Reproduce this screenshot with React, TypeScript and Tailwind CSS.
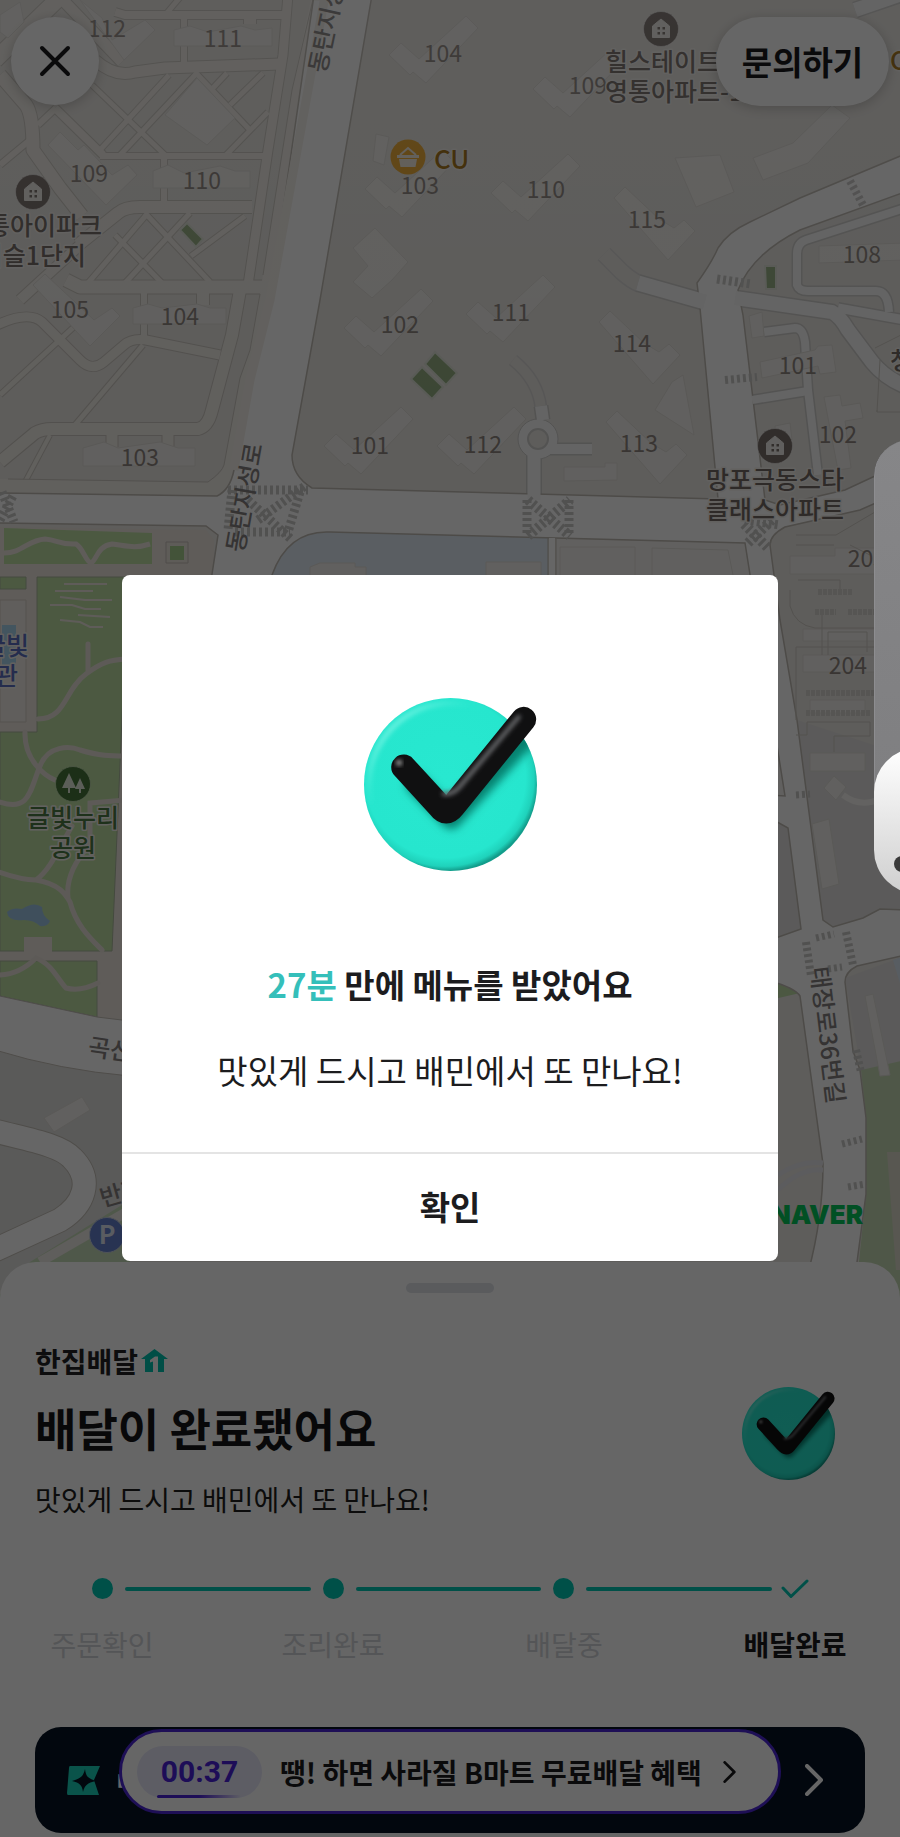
import React, { useId } from "react";

type Point = [number, number];

const FONT = "font-['Noto_Sans_CJK_KR','Noto_Sans',sans-serif]";

/* ---------- shared artwork ---------- */

function CheckArt({ className }: { className: string }) {
  const id = useId();
  return (
    <svg viewBox="133 115 518 518" className={className} overflow="visible" aria-hidden="true">
      <defs>
        <radialGradient id={`${id}disc`} cx="0.47" cy="0.46" r="0.54">
          <stop offset="0" stopColor="#28e8d0" />
          <stop offset="0.86" stopColor="#26e6ce" />
          <stop offset="0.95" stopColor="#1fd2bb" />
          <stop offset="1" stopColor="#129d8b" />
        </radialGradient>
        <linearGradient id={`${id}shine`} x1="0" y1="0" x2="0.6" y2="0.6">
          <stop offset="0" stopColor="#c4fff6" />
          <stop offset="0.55" stopColor="#4cf0dc" stopOpacity="0" />
        </linearGradient>
        <filter id={`${id}soft`} x="-30%" y="-30%" width="160%" height="160%">
          <feGaussianBlur stdDeviation="13" />
        </filter>
        <filter id={`${id}fine`} x="-30%" y="-30%" width="160%" height="160%">
          <feGaussianBlur stdDeviation="6" />
        </filter>
        <clipPath id={`${id}clip`}>
          <circle cx="392" cy="374" r="259" />
        </clipPath>
      </defs>
      <circle cx="392" cy="374" r="259" fill={`url(#${id}disc)`} />
      <g clipPath={`url(#${id}clip)`}>
        <circle cx="392" cy="374" r="243" fill="none" stroke={`url(#${id}shine)`} strokeWidth="16" filter={`url(#${id}fine)`} />
        <path d="M290 372 L394 476 L640 208" fill="none" stroke="#04705f" strokeOpacity="0.85" strokeWidth="64" strokeLinecap="round" strokeLinejoin="round" filter={`url(#${id}soft)`} />
      </g>
      <path d="M252 322 L360 440 Q379 466 399 440 L611 179" fill="none" stroke="#101011" strokeWidth="75" strokeLinecap="round" strokeLinejoin="round" />
      <path d="M372 402 Q400 404 420 380 L596 172" fill="none" stroke="#66676a" strokeWidth="13" strokeLinecap="round" filter={`url(#${id}fine)`} />
      <circle cx="238" cy="309" r="9" fill="#9a9a9a" filter={`url(#${id}fine)`} />
    </svg>
  );
}

function Chevron({ className, width }: { className: string; width: number }) {
  return (
    <svg viewBox="0 0 18 32" className={className} fill="none" stroke="currentColor" strokeWidth={width} strokeLinecap="round" strokeLinejoin="round" aria-hidden="true">
      <path d="M2 2 L16 16 L2 30" />
    </svg>
  );
}

/* ---------- map ---------- */

const STREETS: { d: string; w: number }[] = [
  { d: "M288 -5 L283 55 L268 150 L248 285", w: 9 },
  { d: "M115 12 L125 15 L283 15", w: 8 },
  { d: "M95 60 Q115 78 135 72 L165 68 L280 64", w: 11 },
  { d: "M100 156 L264 156", w: 6 },
  { d: "M78 245 L118 213 Q125 207 140 207 L252 207", w: 12 },
  { d: "M66 280 L80 287 L262 287", w: 13 },
  { d: "M0 75 L26 105 Q33 115 33 150 L60 188 L82 216", w: 13 },
  { d: "M-5 60 L62 -5", w: 16 },
  { d: "M58 -5 L122 62", w: 11 },
  { d: "M182 -5 L166 14", w: 5 },
  { d: "M92 85 L165 155", w: 5 },
  { d: "M195 72 L250 130", w: 5 },
  { d: "M55 108 L103 155", w: 8 },
  { d: "M100 150 L169 75", w: 5 },
  { d: "M120 155 L197 73", w: 5 },
  { d: "M226 155 L268 112", w: 5 },
  { d: "M213 88 L227 73", w: 5 },
  { d: "M230 105 L263 73", w: 5 },
  { d: "M38 125 L56 108", w: 6 },
  { d: "M0 165 L30 140", w: 6 },
  { d: "M145 213 L210 282", w: 5 },
  { d: "M115 235 L162 283", w: 5 },
  { d: "M88 283 L148 213", w: 5 },
  { d: "M125 283 L190 213", w: 5 },
  { d: "M191 256 L245 216", w: 5 },
  { d: "M20 300 L80 245", w: 10 },
  { d: "M184 18 L184 62", w: 6 },
  { d: "M250 18 L250 24", w: 12 },
  { d: "M164 158 L164 205", w: 6 },
  { d: "M144 290 L144 338", w: 6 },
  { d: "M203 290 L203 305", w: 12 },
  { d: "M-5 326 Q28 310 42 322 L80 360 Q92 372 104 362 L124 345 Q132 338 146 340 L220 355", w: 9 },
  { d: "M0 395 L76 325", w: 5 },
  { d: "M143 345 L75 425", w: 5 },
  { d: "M0 462 L35 433 Q42 429 52 429 L198 429 Q208 427 212 410 L232 335 L240 290", w: 12 },
  { d: "M50 435 L25 482", w: 4 },
  { d: "M112 432 L112 447", w: 11 },
  { d: "M168 432 L168 447", w: 11 },
];

const WHITE_STREETS: { d: string; w: number }[] = [
  { d: "M638 283 L705 302", w: 15 },
  { d: "M735 298 L832 312 Q840 316 848 330 L872 362 Q885 378 905 386", w: 14 },
  { d: "M905 208 L806 240 Q797 243 797 254 L797 285 Q799 291 808 291 L876 291 Q888 291 889 312", w: 8 },
  { d: "M838 308 L905 320", w: 9 },
  { d: "M764 332 L795 328 Q803 328 805 342 L808 390 L818 475", w: 8 },
  { d: "M752 400 L808 391", w: 8 },
  { d: "M543 420 L541 406", w: 12 },
  { d: "M545 449 L592 449", w: 10 },
  { d: "M534 450 L534 500", w: 13 },
  { d: "M855 10 L908 -8", w: 14 },
];

const RAMPS: { d: string; w: number }[] = [
  { d: "M604 254 L622 272 Q632 281 640 284", w: 15 },
  { d: "M541 408 Q538 380 513 360", w: 10 },
];

const WING = "0,0 12,-12 30,4 77,-39 89,-27 37,28 24,17 21,20";
const WING_ALT = "0,0 11,-11 45,21 60,30 70,22 81,33 54,62";

const WINGS: Point[] = [[389, 55], [533, 89], [365, 189], [491, 193], [344, 328], [466, 314], [324, 446], [437, 446]];
const WINGS_ALT: Point[] = [[614, 198], [599, 322], [606, 422]];

const BUILDINGS = [
  "174,30 190,26 208,32 241,26 255,30 272,28 272,46 174,46",
  "153,171 168,165 184,173 220,166 235,171 250,171 250,188 153,188",
  "133,308 148,304 162,308 197,304 210,308 226,308 226,324 133,324",
  "83,448 104,442 118,448 160,442 178,448 195,448 195,466 83,466",
  "48,145 60,132 78,150 84,145 100,162 112,175 128,165 137,175 106,205",
  "0,15 20,2 24,22 8,38 0,32",
  "80,0 102,18 112,40 145,20 155,30 124,60",
  "33,285 45,274 62,290 75,302 94,320 112,308 120,316 90,346",
  "165,115 197,78 235,118 207,145",
  "353,248 375,228 408,262 392,280 372,298 353,282 368,266",
  "675,158 720,155 734,192 696,207",
  "753,158 793,143 832,105 850,118 808,163 763,180",
  "655,410 672,382 683,375 694,435",
  "376,134 389,137 384,165 373,161",
  "819,246 905,243 905,260 819,263",
  "760,362 815,350 818,346 832,345 836,372 820,374 818,366 762,378",
  "824,397 840,395 842,406 860,403 863,418 845,421 851,468 838,470",
  "564,467 605,467 605,463 617,463 617,480 564,481",
  "749,316 762,312 764,336 752,338",
  "775,426 790,423 792,440 776,440",
  "790,556 835,556 835,548 905,548 905,574 790,574",
  "803,629 876,629 876,641 803,641",
  "810,700 865,700 865,713 810,713",
  "803,655 876,655 876,672 803,672",
  "810,753 865,753 865,771 810,771",
  "812,824 829,819 839,884 822,889",
  "44,1118 82,1097 90,1110 54,1132",
  "824,788 834,776 846,787 836,800",
  "865,996 873,994 890,1075 880,1076",
];

const CROSSINGS: { d: string; w: number }[] = [
  { d: "M228 490 L308 490", w: 9 },
  { d: "M235 532 L290 532", w: 9 },
  { d: "M232 490 L228 530", w: 9 },
  { d: "M300 492 L288 532", w: 9 },
  { d: "M248 500 L292 540", w: 9 },
  { d: "M258 520 L305 486", w: 9 },
  { d: "M527 500 L527 535", w: 9 },
  { d: "M569 500 L569 535", w: 9 },
  { d: "M528 500 L570 536", w: 10 },
  { d: "M528 536 L570 500", w: 10 },
  { d: "M745 520 L780 525", w: 9 },
  { d: "M748 543 L772 520", w: 10 },
  { d: "M744 524 L768 548", w: 10 },
  { d: "M2 492 L14 522", w: 9 },
  { d: "M0 520 L14 494", w: 9 },
  { d: "M717 279 L751 284", w: 9 },
  { d: "M725 380 L757 377", w: 8 },
  { d: "M850 181 L863 205", w: 8 },
  { d: "M846 932 L853 965", w: 8 },
  { d: "M806 942 L811 976", w: 8 },
  { d: "M816 938 L834 934", w: 7 },
  { d: "M828 969 L842 967", w: 7 },
  { d: "M842 1144 L862 1139", w: 7 },
  { d: "M848 1187 L866 1184", w: 7 },
  { d: "M796 795 L810 794", w: 7 },
  { d: "M856 1050 L861 1072", w: 8 },
];

const NUMBERS: [string, number, number][] = [
  ["112", 107, 29], ["111", 223, 39], ["109", 89, 174], ["110", 202, 181], ["104", 443, 54],
  ["109", 588, 86], ["103", 420, 186], ["110", 546, 190], ["115", 647, 220], ["108", 862, 255],
  ["105", 70, 310], ["104", 180, 317], ["103", 140, 458], ["102", 400, 325], ["111", 511, 313],
  ["114", 632, 344], ["101", 798, 366], ["101", 370, 446], ["112", 483, 445], ["113", 639, 444],
  ["102", 838, 435], ["205", 867, 559], ["204", 848, 666],
];

const ROAD_TREE = [
  "M314 -5 L372 -5 L320 300 L292 455 Q292 476 312 488 L718 499 L700 308 L697 283 Q712 262 718 248 Q728 232 750 222 L800 198 L905 154 L905 192 L800 230 Q752 254 738 290 L743 315 L765 500 L780 505 L845 490 L905 462 L905 490 L860 510 L785 527 Q770 535 770 545 L780 620 L797 720 L823 920 L833 927 L863 918 L880 909 L905 910 L905 955 L857 966 Q845 972 845 982 L853 1051 L860 1070 L866 1118 L866 1194 L852 1300 L800 1300 Q823 1230 823 1164 L800 996 Q795 988 770 981 L770 940 L801 929 L788 828 L770 818 L770 795 L785 796 L745 543 L330 532 Q288 530 272 575 L260 620 L205 620 L218 535 L206 526 L-5 523 L-5 493 L217 496 Q230 490 234 470 L250 380 L270 300 Z",
];

function HousePin({ x, y }: { x: number; y: number }) {
  return (
    <g transform={`translate(${x} ${y})`}>
      <circle r="17.5" fill="#7a706b" stroke="#fff" strokeOpacity="0.5" />
      <path d="M-8.500 -3 L0 -10 L8.500 -3 V8.500 H-8.500 Z" fill="#f1eeea" stroke="#f1eeea" strokeLinejoin="round" />
      <path d="M-3.500 -2 h2.500 v2.500 h-2.500z M1.500 -2 h2.500 v2.500 h-2.500z M-3.500 3 h2.500 v2.500 h-2.500z M1.500 3 h2.500 v2.500 h-2.500z" fill="#7a706b" />
    </g>
  );
}

function DeliveryMap() {
  return (
    <svg viewBox="0 0 900 1298" className={`block h-auto w-full ${FONT}`} role="img" aria-label="배달 지도">
      <defs>
        <linearGradient id="topFade" x1="0" y1="0" x2="0" y2="1">
          <stop offset="0" stopColor="#fff" stopOpacity="0.14" />
          <stop offset="1" stopColor="#fff" stopOpacity="0" />
        </linearGradient>
      </defs>
      <rect width="900" height="1298" fill="#ebe8e3" />

      {/* city blocks west of the main road */}
      <g fill="none" strokeLinejoin="round">
        {STREETS.map((s) => (
          <path key={s.d} d={s.d} stroke="#cdc9c2" strokeWidth={s.w + 2} />
        ))}
        {STREETS.map((s) => (
          <path key={s.d} d={s.d} stroke="#f3efe9" strokeWidth={s.w} />
        ))}
      </g>
      <path d="M312 -5 L330 -5 L275 300 L250 400 L234 480 L217 496 L-5 493 L-5 479 L208 482 Q222 475 224 465 L240 378 L250 350 L260 294 L263 275 L292 90 Z" fill="#f3efe9" />
      <path d="M314 -5 L292 90 L263 275 M260 294 L250 350 L240 378 L224 465 Q222 472 208 482 L8 479" fill="none" stroke="#cdc9c2" />

      {/* areas around the junctions */}
      <path d="M272 575 Q288 530 330 532 L548 537 V640 H260 Z" fill="#e0ebf4" />
      <path d="M556 539 L745 543 L790 800 H556 Z" fill="#f3f1ee" />
      <path d="M797 720 L905 755 V912 L833 927 L823 920 Z M770 818 L788 828 L801 929 L770 940 Z" fill="#e3e2e0" />
      <path d="M845 978 L905 956 V1062 L861 1070 Z" fill="#e3e2e1" />
      <path d="M893 960 L905 956 V1000 Z" fill="#dbe8f6" />
      <path d="M861 1070 L905 1060 V1300 H855 L866 1194 V1118 Z" fill="#c6dab5" />
      <path d="M887 1152 H905 V1270 H896 Z" fill="#dcd9ca" />
      <path d="M770 980 L800 993 L770 1000 Z" fill="#bddba6" />

      {/* park */}
      <path d="M-5 527 L206 530 L214 540 V640 L130 1040 L-5 1000 Z" fill="#ede6df" />
      <path d="M4 528 L152 533 V564 H4 Z" fill="#bddfa4" />
      <path d="M0 577 H26 V589 H0 Z M37 577 H128 L112 951 H0 V732 H37 Z" fill="#bddfa4" stroke="#aab89c" />
      <path d="M0 961 H97 V1017 L0 996 Z" fill="#bddfa4" stroke="#aab89c" />
      <path d="M166 542 H188 V563 H166 Z" fill="#ece6dd" stroke="#c6c0b8" />
      <rect x="170" y="546" width="14" height="14" fill="#a8d08e" />
      <path d="M4 553 C22 553 28 540 45 539 C58 540 60 545 76 544 C83 548 86 562 91 563 C97 560 97 546 112 544 C128 546 134 549 150 544" fill="none" stroke="#ede6df" strokeWidth="5" />
      <g fill="none" stroke="#e9e2da" strokeWidth="5" strokeLinecap="round">
        <path d="M38 719 C66 719 64 690 86 674 C102 662 110 660 126 659" />
        <path d="M88 644 V670 M25 732 C24 760 45 776 55 780" />
        <path d="M0 802 C30 812 30 790 40 766 C48 745 70 746 80 750 C100 756 110 756 126 756" />
        <path d="M-4 871 Q20 880 36 880 C50 870 58 850 72 826 M36 880 C60 884 66 895 70 902 C76 925 90 938 102 950 M68 898 C66 880 74 862 90 845 L90 803 L126 800" />
        <path d="M0 975 Q20 974 36 958 C52 964 58 980 66 988 Q80 992 98 983" />
      </g>
      <path d="M64 584 H107 M55 591 H93 M60 597 L85 600 H112 M50 605 H72 L85 609 H101 M78 615 L110 617 M60 620 L80 622 L90 627 H103" fill="none" stroke="#ede6df" strokeWidth="2" />
      <path d="M24 937 H52 V952 H24 Z" fill="#ede6df" />
      <path d="M7 912 Q12 907 22 909 Q34 901 42 907 Q42 916 50 921 Q48 927 40 926 Q34 920 24 920 Q8 922 7 912 Z" fill="#9fc6e6" />
      <path d="M0 600 H26 V722 H0 Z" fill="#f0ece5" stroke="#d5cec5" />
      <path d="M2 625 H16 V666 H2 Z" fill="#a9d4ee" />

      {/* south west */}
      <path d="M-5 1048 L50 1065 L130 1076 V1290 H-5 Z" fill="#e1e0de" />
      <path d="M-5 995 L97 1017 L130 1021 V1076 Q60 1070 -5 1050 Z" fill="#fff" stroke="#c5c0b8" />
      <path d="M-5 1300 L30 1262 L130 1200 V1300 Z" fill="#c6dcb8" />
      <path d="M-5 1131 C30 1140 60 1145 72 1158 C94 1180 84 1205 60 1220 L-5 1250" fill="none" stroke="#c5c0b8" strokeWidth="25" />
      <path d="M-5 1131 C30 1140 60 1145 72 1158 C94 1180 84 1205 60 1220 L-5 1250" fill="none" stroke="#fff" strokeWidth="23" />
      <path d="M40 1262 L130 1210" fill="none" stroke="#eeeae6" strokeWidth="10" />

      {/* main roads */}
      <g fill="none">
        {RAMPS.map((s) => (
          <path key={s.d} d={s.d} stroke="#d9d8d7" strokeWidth={s.w + 3} />
        ))}
        {RAMPS.map((s) => (
          <path key={s.d} d={s.d} stroke="#ebe8e3" strokeWidth={s.w} />
        ))}
        {WHITE_STREETS.map((s) => (
          <path key={s.d} d={s.d} stroke="#d0cfcd" strokeWidth={s.w + 3} />
        ))}
      </g>
      <circle cx="538" cy="439" r="20" fill="#fbfbfb" stroke="#d0cfcd" />
      {ROAD_TREE.map((d) => (
        <path key={d} d={d} fill="#fff" stroke="#c0bbb3" strokeWidth="1.500" />
      ))}
      <path d="M314 -4 L325 -4 L270 300 L250 380 L234 470" fill="none" stroke="#f5f1eb" strokeWidth="9" />
      <g fill="none" stroke="#fafafa">
        {WHITE_STREETS.map((s) => (
          <path key={s.d} d={s.d} strokeWidth={s.w} />
        ))}
      </g>
      <circle cx="538" cy="439" r="10" fill="#ebe8e3" stroke="#d0cfcd" strokeWidth="2" />
      <path d="M548 537 V640 M556 539 V640" stroke="#c0bbb3" fill="none" />
      <path d="M549 538 H555 V640 H549 Z" fill="#fff" />

      {/* buildings */}
      <g fill="#f3f1ed" stroke="#e1ded9">
        {WINGS.map(([x, y]) => (
          <polygon key={`${x}-${y}`} points={WING} transform={`translate(${x} ${y})`} />
        ))}
        {WINGS_ALT.map(([x, y]) => (
          <polygon key={`${x}-${y}`} points={WING_ALT} transform={`translate(${x} ${y})`} />
        ))}
        {BUILDINGS.map((p) => (
          <polygon key={p} points={p} />
        ))}
        <path d="M560 547 H635 V600 H560 Z M652 548 L728 550 L738 600 H652 Z M486 562 H541 V600 H486 Z M310 567 L320 563 H355 V567 H366 V600 H310 Z" />
      </g>
      <g fill="none" stroke="#d0ccc5">
        <path d="M796 690 V647 H876 M796 720 V690 M796 735 H807 V722 H870 V736 H834 V752 M822 655 V612 M828 655 V632 H867 V652 M790 590 V606 Q795 625 815 628 H875 M798 580 H840 V590 M850 545 L870 555 M877 410 V412 H905 M877 412 L880 360 M875 348 L905 333" />
        <path d="M843 795 Q860 808 880 799" stroke="#f7f5f2" strokeWidth="6" />
        <path d="M796 535 H836 L875 512 M796 545 H834" />
        <path d="M778 1175 Q800 1160 823 1163 M778 1190 Q800 1168 823 1170" stroke="#e6e6ea" strokeWidth="5" />
      </g>
      <g stroke="#d8d5cf" strokeWidth="6" strokeDasharray="4 1" fill="none">
        <path d="M818 592 H852 M815 612 H836 M848 612 H876 M806 693 H874 M806 713 H870" />
      </g>

      {/* sports courts */}
      <g fill="#97b184" stroke="#dfe3d8" strokeWidth="2">
        <path d="M411 379 L422 367 L443 387 L432 399 Z M425 364 L435 352 L457 373 L446 385 Z" />
        <path d="M180 230 L187 223 L203 239 L196 247 Z" />
        <path d="M765 266 H776 V289 H766 Z" />
      </g>

      {/* pedestrian crossings */}
      <g fill="none" stroke="#cbcac8" strokeDasharray="3 3">
        {CROSSINGS.map((c) => (
          <path key={c.d} d={c.d} strokeWidth={c.w} />
        ))}
      </g>

      {/* labels */}
      <g fontSize="23" fill="#8f8680" textAnchor="middle">
        {NUMBERS.map(([label, x, y]) => (
          <text key={`${label}-${x}`} x={x} y={y + 8}>{label}</text>
        ))}
      </g>
      <g fontSize="25" fontWeight="500" fill="#736a65" stroke="#f5f2ee" strokeWidth="3" strokeLinejoin="round" paintOrder="stroke">
        <text x="605" y="71">힐스테이트</text>
        <text x="605" y="101">영통아파트-1</text>
        <text x="102" y="235" textAnchor="end">통아이파크</text>
        <text x="86" y="265" textAnchor="end">이슬1단지</text>
        <text x="775" y="489" textAnchor="middle">망포극동스타</text>
        <text x="775" y="519" textAnchor="middle">클래스아파트</text>
        <text x="890" y="370">청</text>
        <g fill="#4d7a44" textAnchor="middle">
          <text x="73" y="827">글빛누리</text>
          <text x="73" y="857">공원</text>
        </g>
        <g fill="#5a6fc0" textAnchor="end">
          <text x="29" y="655">글빛</text>
          <text x="18" y="685">관</text>
        </g>
        <g fill="#a36f0c">
          <text x="434" y="169" fontSize="26">CU</text>
          <text x="890" y="70">C</text>
        </g>
      </g>
      <g fontSize="24" fontWeight="500" fill="#858180" textAnchor="middle">
        <text transform="translate(253 499) rotate(-80)">동탄지성로</text>
        <text transform="translate(337 20) rotate(-78)">동탄지성로</text>
        <text transform="translate(819 1036) rotate(83)">태장로36번길</text>
        <text transform="translate(109 1058) rotate(8)">곡산</text>
        <text transform="translate(124 1201) rotate(-16)">반정</text>
      </g>

      <HousePin x={33} y={192} />
      <HousePin x={661} y={29} />
      <HousePin x={775} y={446} />
      <g transform="translate(408 157)">
        <circle r="17.5" fill="#f2ab2c" />
        <path d="M-11 -2 H11 V1 H-11 Z M-9 2 H9 L7.500 10 H-7.500 Z" fill="#f6efe2" />
        <path d="M-8 -2 L0 -9 L8 -2" fill="none" stroke="#f6efe2" strokeWidth="2" />
      </g>
      <g transform="translate(73 784)">
        <circle r="17.5" fill="#47773a" stroke="#cfe4bd" strokeOpacity="0.7" />
        <path d="M-4 -11 L-11 4 H-5 V9 H-3 V4 H3 Z M7 -6 L2 5 H6 V9 H8 V5 H12 Z" fill="#e4ecdc" />
      </g>
      <circle cx="107" cy="1235" r="17.500" fill="#6480cc" stroke="#c6cede" />
      <text x="107" y="1244" fontSize="25" fontWeight="700" fill="#dfe5f2" textAnchor="middle">P</text>
      <text x="863" y="1224" fontSize="26" fontWeight="900" fill="#03c75a" textAnchor="end" className="font-['Inter',sans-serif]">NAVER</text>
      <rect width="900" height="400" fill="url(#topFade)" />
    </svg>
  );
}

/* ---------- order status sheet ---------- */

const STEPS = ["주문확인", "조리완료", "배달중", "배달완료"];

function Progress() {
  return (
    <div>
      <div className="mt-[59px] flex items-center gap-3 pr-[95px] pl-[92px]" aria-hidden="true">
        {STEPS.slice(0, 3).map((step) => (
          <React.Fragment key={step}>
            <span className="h-[21px] w-[21px] rounded-full bg-[#00c8b4]" />
            <span className="h-1 flex-1 rounded-full bg-[#00c8b4]" />
          </React.Fragment>
        ))}
        <span className="flex w-[21px] justify-center">
          <svg viewBox="0 0 28 21" className="h-[21px] w-7 shrink-0" fill="none" stroke="#00c8b4" strokeWidth="3" strokeLinecap="round" strokeLinejoin="round">
            <path d="M2 10 L10 18.500 L26 3" />
          </svg>
        </span>
      </div>
      <ol className="mt-[25px] flex justify-between pr-[46px] pl-[43px] text-[28px] leading-10">
        {STEPS.map((step, i) => (
          <li key={step} className={i === 3 ? "w-[118px] text-center font-bold text-[#1b1b1d]" : "w-[118px] text-center text-[#d3d5d9]"}>
            {step}
          </li>
        ))}
      </ol>
    </div>
  );
}

function StatusSheet() {
  return (
    <section className="relative -mt-9 flex flex-1 flex-col rounded-t-[36px] bg-white pt-[21px] pb-[3px]">
      <span className="h-[10px] w-[88px] self-center rounded-full bg-[#e0e3e9]" />
      <div className="mt-[48px] flex items-start justify-between pr-[65px] pl-[35px]">
        <div>
          <p className="flex items-center gap-[3px] text-[28px] leading-10 font-bold text-[#222224]">
            한집배달
            <svg viewBox="0 0 27 24" className="h-6 w-[27px]" aria-hidden="true">
              <path d="M13.500 0 L27 10 H23 V23 H17 V7.500 H14 L9 11 V13.500 L12 12.500 V23 H4 V10 H0 Z" fill="#00c3ae" />
            </svg>
          </p>
          <h1 className="mt-[17px] text-[45px] leading-[60px] font-bold text-[#161617]">배달이 완료됐어요</h1>
          <p className="mt-[21px] text-[28px] leading-10 text-[#1e1e20]">맛있게 드시고 배민에서 또 만나요!</p>
        </div>
        <CheckArt className="mt-[46px] h-[93px] w-[93px]" />
      </div>
      <Progress />
      <div className="relative mx-[35px] mt-[63px]">
        <a href="#membership" aria-label="멤버십" className="flex h-[106px] items-center justify-between rounded-[26px] bg-[#051223] pr-[42px] pl-8 text-white">
          <span className="flex items-center gap-[14px]">
            <svg viewBox="0 0 33 29" className="h-[29px] w-[33px]" aria-hidden="true">
              <path d="M3 0 H33 L27 14 L32 29 H1 Q0 29 0 27 L2 2 Q2 0 3 0 Z" fill="#19cfb8" />
              <path d="M18 3 C19 10 20 12 29 15 C20 17 18 19 16 26 C15 19 13 17 5 15 C14 12 16 11 18 3 Z" fill="#051223" />
            </svg>
            <span className="text-[26px] leading-10 font-bold">ㅁ</span>
          </span>
          <Chevron className="h-[32px] w-[18px]" width={4} />
        </a>
        <a href="#bmart" className="absolute top-[2px] left-1/2 flex h-[85px] w-[662px] -translate-x-1/2 items-center rounded-full border-[3px] border-[#4c27d6] bg-white pl-[15px] text-[28px] text-[#1b1b1d]">
          <span className="relative flex h-[52px] w-[125px] items-center justify-center rounded-full bg-[#e9e9fb] font-['Roboto',sans-serif] text-[30px] font-bold text-[#4a21da]">
            00:37
            <span className="absolute bottom-0 left-5 h-[3px] w-[84px] rounded-full bg-linear-to-r from-[#4a21da] from-50% to-transparent" />
          </span>
          <span className="ml-[18px] font-bold whitespace-nowrap">땡! 하면 사라질 B마트 무료배달 혜택</span>
          <Chevron className="ml-[21px] h-[22px] w-[13px]" width={4} />
        </a>
      </div>
    </section>
  );
}

/* ---------- dialog ---------- */

function DeliveredDialog() {
  return (
    <div className="absolute inset-0 flex items-center justify-center bg-black/60 pb-[2px]">
      <div role="dialog" aria-modal="true" aria-labelledby="done-title" className="flex w-[656px] max-w-[90%] flex-col items-center overflow-hidden rounded-lg bg-white pt-[123px] text-[33px] text-[#1c1c1e]">
        <CheckArt className="h-[173px] w-[173px]" />
        <h2 id="done-title" className="mt-[89px] leading-[48px] font-bold">
          <span className="text-[#35bfba]">27분</span> 만에 메뉴를 받았어요
        </h2>
        <p className="mt-[38px] mb-[58px] leading-[48px]">맛있게 드시고 배민에서 또 만나요!</p>
        <button type="button" className="h-[109px] w-full border-t-2 border-[#e4e4e4] font-bold">확인</button>
      </div>
    </div>
  );
}

function EdgeBubble() {
  return (
    <div className="absolute top-[440px] right-0 h-[454px] w-[26px] overflow-hidden" aria-hidden="true">
      <div className="h-[440px] w-[80px] rounded-[36px] bg-[#3a3938]" />
      <div className="absolute top-0 left-0 h-[400px] w-[80px] rounded-tl-[36px] border-l border-[#8d8d90] bg-linear-to-b from-[#868688] to-[#7e7e80]" />
      <div className="absolute bottom-0 left-0 h-[146px] w-[120px] rounded-[44px] bg-linear-to-b from-white to-[#cfcfcf]" />
      <span className="absolute bottom-[22px] left-5 h-4 w-6 rounded-full bg-[#3a3a3a]" />
    </div>
  );
}

export default function App() {
  return (
    <main className={`relative flex min-h-screen flex-col overflow-hidden bg-white ${FONT}`}>
      <div className="relative">
        <DeliveryMap />
        <header className="absolute inset-x-0 top-[17px] flex justify-between px-[11px]">
          <button type="button" aria-label="닫기" className="flex h-[88px] w-[88px] items-center justify-center rounded-full bg-white shadow-[0_2px_12px_rgba(0,0,0,0.2)]">
            <svg viewBox="0 0 32 32" className="h-8 w-8" fill="none" stroke="#1b1b1d" strokeWidth="4" strokeLinecap="round" aria-hidden="true">
              <path d="M3 3 L29 29 M29 3 L3 29" />
            </svg>
          </button>
          <button type="button" className="h-[89px] w-[173px] rounded-full bg-white text-[33px] font-bold text-[#1b1b1d] shadow-[0_2px_12px_rgba(0,0,0,0.2)]">
            문의하기
          </button>
        </header>
      </div>
      <StatusSheet />
      <DeliveredDialog />
      <EdgeBubble />
    </main>
  );
}
